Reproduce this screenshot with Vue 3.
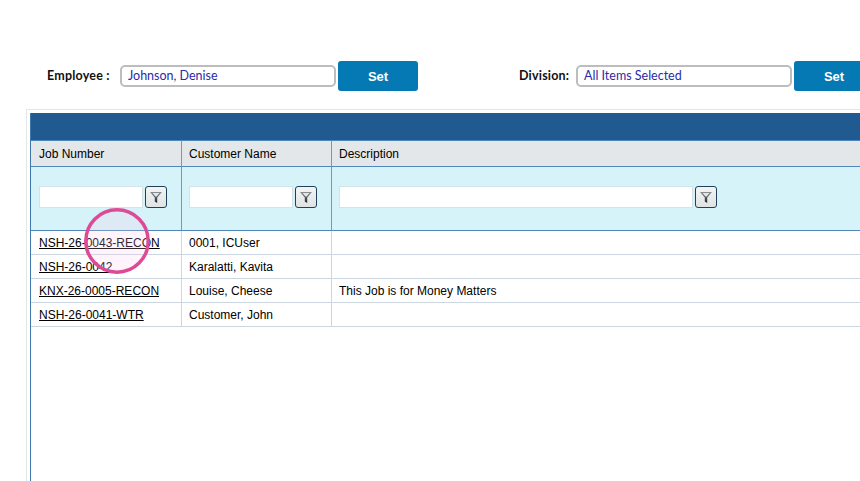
<script setup>
import { ref } from 'vue'

const jobs = ref([
  { id: 1, number: 'NSH-26-0043-RECON', customer: '0001, ICUser', description: '' },
  { id: 2, number: 'NSH-26-0042', customer: 'Karalatti, Kavita', description: '' },
  { id: 3, number: 'KNX-26-0005-RECON', customer: 'Louise, Cheese', description: 'This Job is for Money Matters' },
  { id: 4, number: 'NSH-26-0041-WTR', customer: 'Customer, John', description: '' }
])

const filters = [
  { key: 'number', width: 104 },
  { key: 'customer', width: 104 },
  { key: 'description', width: 354 }
]
</script>

<template>
  <div class="page">
    <div class="toolbar">
      <div class="picker picker-employee">
        <label class="picker-label">Employee :</label>
        <div class="picker-input">Johnson, Denise</div>
        <button class="set-btn">Set</button>
      </div>
      <div class="picker picker-division">
        <label class="picker-label">Division:</label>
        <div class="picker-input">All Items Selected</div>
        <button class="set-btn">Set</button>
      </div>
    </div>

    <div class="frame">
      <div class="grid">
        <div class="grid-title"></div>
        <table>
          <colgroup>
            <col class="col-a" />
            <col class="col-b" />
            <col />
          </colgroup>
          <thead>
            <tr class="head-row">
              <th>Job Number</th>
              <th>Customer Name</th>
              <th>Description</th>
            </tr>
            <tr class="filter-row">
              <td v-for="f in filters" :key="f.key">
                <div class="filter">
                  <input type="text" :style="{ width: f.width + 'px' }" />
                  <button class="filter-btn">
                    <svg width="14" height="14" viewBox="0 0 14 14">
                      <defs>
                        <linearGradient id="funnel" x1="0" y1="0" x2="0" y2="1">
                          <stop offset="0" stop-color="#8d9296" />
                          <stop offset="1" stop-color="#1c2125" />
                        </linearGradient>
                      </defs>
                      <path d="M1 2h12L8.2 7.4V13L5.8 11.6V7.4z" fill="url(#funnel)" />
                      <path d="M3.6 3.1h6.8L7.6 6.4H6.4z" fill="#e4e7e9" />
                    </svg>
                  </button>
                </div>
              </td>
            </tr>
          </thead>
          <tbody>
            <tr v-for="job in jobs" :key="job.id" class="data-row">
              <td><a href="#" class="job-link">{{ job.number }}</a></td>
              <td>{{ job.customer }}</td>
              <td>{{ job.description }}</td>
            </tr>
          </tbody>
        </table>
      </div>
      <svg class="click-marker" width="68" height="68" viewBox="0 0 68 68">
        <circle cx="34" cy="34" r="31.2" fill="#ffc8eb" fill-opacity="0.2" stroke="#dd4b97" stroke-width="3.5" />
      </svg>
    </div>
  </div>
</template>

<style>
html, body { margin: 0; background: #fff; overflow: hidden; }
</style>

<style scoped>
.page {
  width: 860px;
  height: 481px;
  overflow: hidden;
  background: #fff;
  font-family: "Liberation Sans", Arial, sans-serif;
  box-sizing: border-box;
  padding-top: 61px;
}

/* TOOLBAR */
.toolbar {
  display: flex;
  width: 1000px;
  height: 30px;
  margin-bottom: 18px;
}
.picker {
  display: flex;
  align-items: center;
}
.picker-employee { margin-left: 47px; width: 472px; }
.picker-label {
  font-family: Lato, sans-serif;
  font-size: 12.5px;
  font-weight: 700;
  letter-spacing: 0.2px;
  color: #111;
  position: relative;
  top: -1px;
}
.picker-employee .picker-label { width: 73px; }
.picker-division .picker-label { width: 57px; }
.picker-input {
  width: 216px;
  height: 22px;
  box-sizing: border-box;
  border: 2px solid #bdbdbd;
  border-radius: 5px;
  padding-left: 6px;
  margin-right: 2px;
  font-family: Lato, sans-serif;
  font-size: 12.5px;
  line-height: 17px;
  color: #2b2ba8;
  background: #fff;
}
.set-btn {
  width: 80px;
  height: 30px;
  border: 0;
  border-radius: 3px;
  padding: 0;
  background: #0579b4;
  color: #fff;
  font-family: inherit;
  font-size: 13px;
  font-weight: 700;
}

/* GRID */
.frame {
  position: relative;
  width: 900px;
  height: 400px;
  margin-left: 26px;
  border: 1px solid #e6e6e6;
  border-width: 1px 0 0 1px;
  padding: 3px 0 0 3px;
  box-sizing: border-box;
}
.grid {
  border-left: 1px solid #3f78ad;
  height: 100%;
}
.grid-title {
  height: 27px;
  background: #205a91;
}
table {
  width: 100%;
  table-layout: fixed;
  border-collapse: separate;
  border-spacing: 0;
  font-size: 12px;
  color: #000;
}
.col-a { width: 151px; }
.col-b { width: 150px; }
.head-row th {
  height: 26px;
  box-sizing: border-box;
  padding: 0 0 0 7px;
  background: #e3e7ea;
  border-top: 1px solid #4f87ba;
  border-right: 1px solid #6b9bc6;
  font-weight: 400;
  text-align: left;
}
.filter-row td {
  height: 65px;
  box-sizing: border-box;
  padding: 19px 0 0 7px;
  vertical-align: top;
  background: #d5f3f9;
  border-top: 1px solid #4f87ba;
  border-bottom: 1px solid #4f87ba;
  border-right: 1px solid #6b9bc6;
}
.filter {
  display: flex;
  align-items: center;
  gap: 2px;
}
.filter input {
  height: 22px;
  box-sizing: border-box;
  border: 1px solid #d3e3ea;
  background: #fff;
  padding: 0;
  margin: 0;
}
.filter-btn {
  width: 22px;
  height: 22px;
  box-sizing: border-box;
  padding: 0;
  display: flex;
  align-items: center;
  justify-content: center;
  border: 1px solid #1f3f5a;
  border-radius: 3px;
  background: linear-gradient(#f4f4f4, #dfe3e4);
}
.data-row td {
  height: 24px;
  box-sizing: border-box;
  padding: 0 0 0 7px;
  border-bottom: 1px solid #ccd6e0;
  border-right: 1px solid #ccd6e0;
  white-space: nowrap;
}
.head-row th:first-child,
.filter-row td:first-child,
.data-row td:first-child { padding-left: 8px; }
.job-link { color: #000; text-decoration: underline; }

/* click highlight over the first rows */
.click-marker {
  position: absolute;
  left: 56px;
  top: 97px;
}
</style>
